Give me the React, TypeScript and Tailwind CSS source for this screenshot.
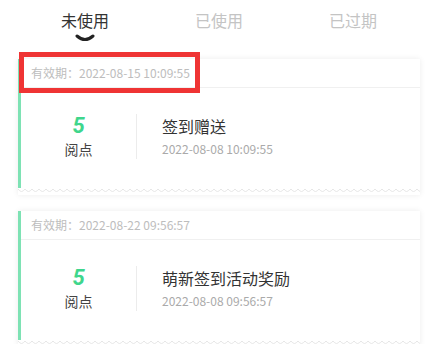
import React from "react";

const tabs = ["未使用", "已使用", "已过期"];

const coupons = [
  { expire: "2022-08-15 10:09:55", title: "签到赠送", date: "2022-08-08 10:09:55" },
  { expire: "2022-08-22 09:56:57", title: "萌新签到活动奖励", date: "2022-08-08 09:56:57" },
];

function Wave() {
  return (
    <svg className="block w-full h-[7px]" preserveAspectRatio="none">
      <defs>
        <pattern id="wave" width="14" height="7" patternUnits="userSpaceOnUse">
          <path d="M0 1 Q3.5 6 7 1 Q10.5 6 14 1" fill="none" stroke="#e6e6e6" strokeWidth="1" />
        </pattern>
      </defs>
      <rect width="100%" height="7" fill="url(#wave)" />
    </svg>
  );
}

function Coupon({ expire, title, date }: { expire: string; title: string; date: string }) {
  return (
    <div className="shadow-[0_0_6px_rgba(0,0,0,0.08)] bg-white">
      <div className="border-l-[3px] border-[#7ee2b4]">
        <div className="h-[29px] flex items-center pl-[10px] border-b border-[#f0f0f0] text-[12px] text-[#bdbdbd]">
          有效期：{expire}
        </div>
        <div className="h-[100px] flex items-center pb-[4px]">
          <div className="w-[115px] flex flex-col items-center">
            <span
              className="text-[22px] leading-[26px] font-bold italic text-[#3fd68c]"
              style={{ fontFamily: "Roboto, sans-serif" }}
            >
              5
            </span>
            <span className="text-[14px] leading-[20px] text-[#444]">阅点</span>
          </div>
          <div className="w-px h-[45px] bg-[#ececec]" />
          <div className="ml-[25px] flex flex-col">
            <span className="text-[16px] leading-[22px] text-[#333]">{title}</span>
            <span className="text-[12px] leading-[18px] mt-[3px] text-[#aaa]">{date}</span>
          </div>
        </div>
      </div>
      <Wave />
    </div>
  );
}

export default function App() {
  return (
    <div
      className="relative w-[438px] h-[344px] overflow-hidden bg-white px-[18px]"
      style={{ fontFamily: '"Noto Sans CJK SC", "Noto Sans", sans-serif' }}
    >
      <div className="grid grid-cols-3 h-[59px]">
        {tabs.map((t, i) => (
          <div key={t} className="flex flex-col items-center pt-[9px]">
            <span className={`text-[16px] leading-[22px] ${i === 0 ? "text-[#333]" : "text-[#c4c4c4]"}`}>{t}</span>
            {i === 0 && (
              <svg width="20" height="8" viewBox="0 0 20 8" className="mt-[3px]">
                <path d="M2 2 Q10 9 18 2" fill="none" stroke="#222" strokeWidth="3" strokeLinecap="round" />
              </svg>
            )}
          </div>
        ))}
      </div>
      <div className="flex flex-col gap-[16px]">
        {coupons.map((c) => (
          <Coupon key={c.expire} {...c} />
        ))}
      </div>
      <div className="absolute left-[19px] top-[52px] w-[181px] h-[41px] border-[5px] border-[#ef3434]" />
    </div>
  );
}
